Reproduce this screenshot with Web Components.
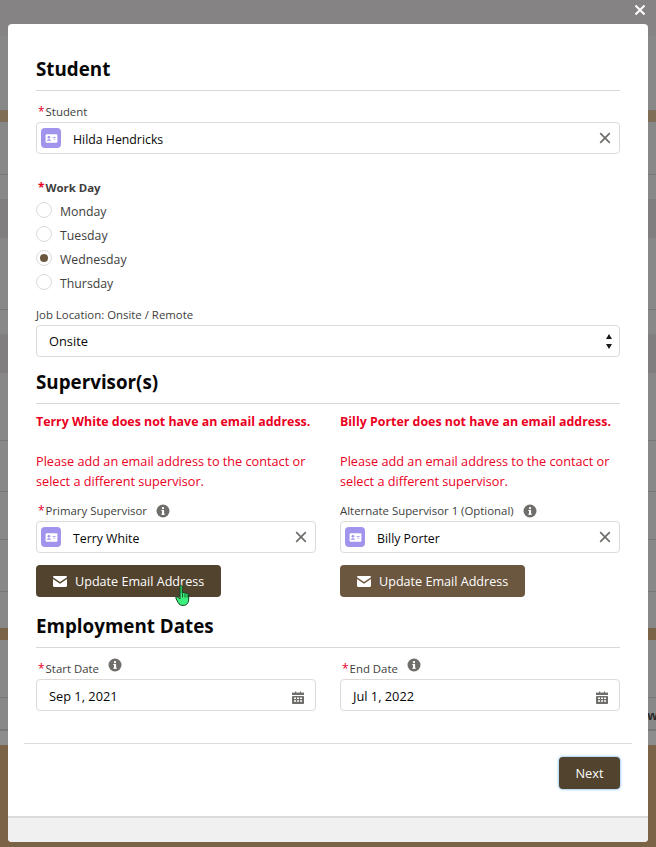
<!DOCTYPE html>
<html>
<head>
<meta charset="utf-8">
<style>
html, body { margin: 0; padding: 0; height: 847px; overflow: hidden; }
body { font-family: "Open Sans", "Noto Sans", sans-serif; color: #181818; }
</style>
</head>
<body>
<template id="field-label-tpl">
  <style>
    :host { display: flex; align-items: center; font-size: 11.4px; line-height: 16px; color: #3e3e3c; }
    .req { color: #ea001e; margin-right: 1px; display: none; font-size: 12px; }
    :host([required]) { padding-left: 2px; }
    :host([required]) .req { display: inline; }
    :host([bold]) { font-weight: 700; }
    .info { display: none; width: 14px; height: 14px; margin-left: 9px; color: #706e6b; }
    :host([info]) .info { display: block; }
    :host([raise]) .info { position: relative; top: -4px; }
    svg { display: block; width: 14px; height: 14px; }
  </style>
  <span class="req">*</span><slot></slot>
  <span class="info"><svg viewBox="0 0 14 14"><circle cx="7" cy="7" r="6.5" fill="currentColor"/><rect x="6" y="6" width="2.1" height="4.6" fill="#fff"/><rect x="5.3" y="6" width="2" height="1" fill="#fff"/><rect x="5.3" y="9.7" width="3.5" height="1" fill="#fff"/><circle cx="7" cy="4.2" r="1.15" fill="#fff"/></svg></span>
</template>

<template id="lookup-field-tpl">
  <style>
    :host { display: flex; align-items: center; height: 32px; box-sizing: border-box; border: 1px solid #dddbda; border-radius: 4px; background: #fff; font-size: 12.3px; color: #080707; padding: 0 7px 0 4px; }
    .ico { flex: none; width: 20px; height: 20px; border-radius: 4px; background: #a094ed; display: flex; align-items: center; justify-content: center; }
    .ico svg { display: block; width: 15px; height: 15px; }
    .txt { flex: 1; margin-left: 12px; margin-top: 2px; }
    .x { flex: none; width: 14px; height: 14px; display: block; }
  </style>
  <span class="ico"><svg viewBox="0 0 14 14"><rect x="1.500" y="3" width="11" height="8" rx="1" fill="#fff"/><circle cx="4.600" cy="5.800" r="1.250" fill="#a094ed"/><path d="M2.600 9.200c0-1.200.9-1.600 2-1.600s2 .4 2 1.600z" fill="#a094ed"/><path d="M8 5.500h3v.9H8zM8.600 7.300h1.900l-.9 1z" fill="#a094ed"/></svg></span>
  <span class="txt"><slot></slot></span>
  <svg class="x" viewBox="0 0 14 14"><path d="M2.200 2.200l9.600 9.600M11.800 2.200l-9.600 9.600" stroke="#706e6b" stroke-width="1.700" fill="none"/></svg>
</template>

<template id="radio-option-tpl">
  <style>
    :host { display: flex; height: 24px; font-size: 12.3px; color: #3e3e3c; }
    .dot { flex: none; width: 16px; height: 16px; box-sizing: border-box; border: 1px solid #dddbda; border-radius: 50%; background: #fff; margin-top: 4px; display: flex; align-items: center; justify-content: center; }
    :host([checked]) .dot::after { content: ""; width: 8px; height: 8px; border-radius: 50%; background: #6b563f; }
    .lbl { margin-left: 8px; line-height: 18px; margin-top: 5px; }
  </style>
  <span class="dot"></span><span class="lbl"><slot></slot></span>
</template>

<template id="select-field-tpl">
  <style>
    :host { display: flex; align-items: center; justify-content: space-between; height: 32px; box-sizing: border-box; border: 1px solid #dddbda; border-radius: 4px; background: #fff; font-size: 12.800px; color: #080707; padding: 0 7px 0 12px; }
    svg { display: block; width: 6px; height: 15px; }
  </style>
  <slot></slot>
  <svg viewBox="0 0 6 15"><path d="M3 0l3 5H0zM0 10h6l-3 5z" fill="#181818"/></svg>
</template>

<template id="date-field-tpl">
  <style>
    :host { display: flex; align-items: center; justify-content: space-between; height: 32px; box-sizing: border-box; border: 1px solid #dddbda; border-radius: 4px; background: #fff; font-size: 12.800px; color: #080707; padding: 0 11px 0 12px; }
    .txt { margin-top: 2px; }
    svg { display: block; width: 12px; height: 14px; margin-top: 6px; }
  </style>
  <span class="txt"><slot></slot></span>
  <svg viewBox="0 0 12 14"><path d="M3 .5h1.200V2H3zM7.800.5H9V2H7.800z" fill="#706e6b"/><rect x="0" y="1.600" width="12" height="2.400" fill="#706e6b"/><rect x="0" y="5" width="12" height="8" rx=".8" fill="#706e6b"/><path d="M2 6.600h2v1.500H2zM5 6.600h2v1.500H5zM8 6.600h2v1.500H8zM2 9.200h2v1.500H2zM5 9.200h2v1.500H5zM8 9.200h2v1.500H8z" fill="#fff"/></svg>
</template>

<template id="email-button-tpl">
  <style>
    :host { display: inline-flex; align-items: center; height: 32px; box-sizing: border-box; padding: 0 17px; border-radius: 4px; background: #6b563f; color: #fff; font-size: 12.600px; }
    :host([hover]) { background: #52432f; }
    svg { display: block; width: 14px; height: 11px; margin-right: 8px; margin-top: 1px; }
  </style>
  <svg viewBox="0 0 14 11"><path d="M0 1.200C0 .5.500 0 1.200 0h11.600c.7 0 1.200.5 1.200 1.200L7 6z" fill="#fff"/><path d="M0 3l7 4.800L14 3v6.800c0 .7-.5 1.200-1.200 1.200H1.200C.5 11 0 10.500 0 9.800z" fill="#fff"/></svg>
  <slot></slot>
</template>

<template id="section-head-tpl">
  <style>
    :host { display: block; font-size: 18.800px; font-weight: 700; line-height: 24px; color: #080707; border-bottom: 1px solid #d8d8d8; padding-bottom: 9px; }
  </style>
  <slot></slot>
</template>

<template id="modal-shell-tpl">
  <style>
    :host { display: block; height: 847px; box-sizing: border-box; padding: 24px 8px 5px; position: relative;
      background:
        linear-gradient(#777 0 0) 0 174px / 100% 1px no-repeat,
        linear-gradient(#777 0 0) 0 309px / 100% 1px no-repeat,
        linear-gradient(#777 0 0) 0 440px / 100% 1px no-repeat,
        linear-gradient(#777 0 0) 0 491px / 100% 1px no-repeat,
        linear-gradient(#777 0 0) 0 539px / 100% 1px no-repeat,
        linear-gradient(#777 0 0) 0 591px / 100% 1px no-repeat,
        linear-gradient(#777 0 0) 0 697px / 100% 1px no-repeat,
        linear-gradient(#858383 0 36px, #878887 36px 110px, #7f6d55 110px 122px, #878887 122px 199px, #807e7e 199px 238px, #878887 238px 334px, #807e7e 334px 373px, #878887 373px 628px, #7a6448 628px 640px, #878887 640px 729px, #777 729px 731px, #8d8d8d 731px 745px, #7b6347 745px); }
    .close { position: absolute; top: 3px; right: 9px; width: 14px; height: 14px; display: block; }
    .peek { position: absolute; left: 647px; top: 706px; font-size: 13px; font-weight: 700; color: #2b2b2b; }
    .card { position: relative; height: 818px; box-sizing: border-box; background: #fff; border-radius: 4px; display: flex; flex-direction: column; overflow: hidden; }
    .body { flex: none; height: 719px; box-sizing: border-box; padding: 33px 28px 0; }
    .foot { flex: none; box-sizing: border-box; height: 73px; margin: 0 16px; border-top: 1px solid #dddbda; display: flex; justify-content: flex-end; align-items: flex-start; padding: 13px 12px 0 0; }
    .strip { flex: 1; background: #f0f0f0; border-top: 2px solid #dddbda; }
  </style>
  <svg class="close" viewBox="0 0 14 14"><path d="M2.500 2.500l9 9M11.500 2.500l-9 9" stroke="#fff" stroke-width="2" fill="none"/></svg>
  <span class="peek">wi</span>
  <div class="card">
    <div class="body"><slot></slot></div>
    <div class="foot"><slot name="footer"></slot></div>
    <div class="strip"></div>
  </div>
</template>

<template id="next-button-tpl">
  <style>
    :host { display: block; width: 61px; height: 32px; box-sizing: border-box; border-radius: 4px; background: #52432f; color: #fff; font-size: 12.800px; line-height: 32px; text-align: center; box-shadow: 0 0 3px #4a9fe6; }
  </style>
  <slot></slot>
</template>

<template id="hand-cursor-tpl">
  <style>
    :host { position: absolute; left: 175px; top: 585px; width: 17px; height: 22px; display: block; }
    svg { display: block; width: 17px; height: 22px; }
  </style>
  <svg viewBox="0 0 17 22"><path d="M5 1.500c0-1.300 2.200-1.300 2.200 0V8l1-.3c.8-.3 1.500 0 1.800.5.8-.3 1.500 0 1.800.6.900-.3 1.900.2 1.900 1.200V14c0 3-1.500 6.500-5.500 6.500-2.600 0-4-1-5.200-3L1 13.500c-.7-1.200.8-2.400 2-1.200l2 1.700z" fill="#3df07c" stroke="#0c3d1c" stroke-width="1"/><path d="M7.500 8.500v4M10 8.500v4M12.200 9.500v3" stroke="#0c3d1c" stroke-width=".8" fill="none"/></svg>
</template>

<template id="two-col-tpl">
  <style>:host { display: grid; grid-template-columns: 280px 280px; column-gap: 24px; }</style>
  <slot></slot>
</template>

<template id="alert-text-tpl">
  <style>
    :host { display: block; color: #ea001e; font-size: 12.700px; line-height: 20px; }
    ::slotted(b) { display: block; font-weight: 700; font-size: 12.400px; margin-bottom: 19px; }
    ::slotted(span) { display: block; }
  </style>
  <slot></slot>
</template>

<modal-shell>
  <section-head>Student</section-head>
  <field-label required style="margin-top:13px;margin-bottom:2px">Student</field-label>
  <lookup-field>Hilda Hendricks</lookup-field>
  <field-label required bold style="margin-top:26px;margin-bottom:2px">Work Day</field-label>
  <radio-option>Monday</radio-option>
  <radio-option>Tuesday</radio-option>
  <radio-option checked>Wednesday</radio-option>
  <radio-option>Thursday</radio-option>
  <field-label style="margin-top:13px;margin-bottom:2px">Job Location: Onsite / Remote</field-label>
  <select-field>Onsite</select-field>
  <section-head style="margin-top:13px">Supervisor(s)</section-head>
  <two-col style="margin-top:8px">
    <div>
      <alert-text>
        <b>Terry White does not have an email address.</b>
        <span>Please add an email address to the contact or select a different supervisor.</span>
      </alert-text>
      <field-label required info style="margin-top:12px;margin-bottom:2px">Primary Supervisor</field-label>
      <lookup-field>Terry White</lookup-field>
      <email-button hover style="margin-top:12px">Update Email Address</email-button>
    </div>
    <div>
      <alert-text>
        <b>Billy Porter does not have an email address.</b>
        <span>Please add an email address to the contact or select a different supervisor.</span>
      </alert-text>
      <field-label info style="margin-top:12px;margin-bottom:2px">Alternate Supervisor 1 (Optional)</field-label>
      <lookup-field>Billy Porter</lookup-field>
      <email-button style="margin-top:12px">Update Email Address</email-button>
    </div>
  </two-col>
  <section-head style="margin-top:17px">Employment Dates</section-head>
  <two-col style="margin-top:13px">
    <div>
      <field-label required info raise style="margin-bottom:2px">Start Date</field-label>
      <date-field>Sep 1, 2021</date-field>
    </div>
    <div>
      <field-label required info raise style="margin-bottom:2px">End Date</field-label>
      <date-field>Jul 1, 2022</date-field>
    </div>
  </two-col>
  <next-button slot="footer">Next</next-button>
</modal-shell>
<hand-cursor></hand-cursor>

<script>
"use strict";

// every element is just its template cloned into an open shadow root
const defineFromTemplate = (tag) => {
    const template = document.getElementById(`${tag}-tpl`);
    customElements.define(tag, class extends HTMLElement {
        constructor() {
            super();
            this.attachShadow({ mode: 'open' }).appendChild(template.content.cloneNode(true));
        }
    });
};

['field-label', 'lookup-field', 'radio-option', 'select-field', 'date-field', 'email-button',
    'section-head', 'modal-shell', 'next-button', 'hand-cursor', 'two-col', 'alert-text'
].forEach(defineFromTemplate);
</script>
</body>
</html>
